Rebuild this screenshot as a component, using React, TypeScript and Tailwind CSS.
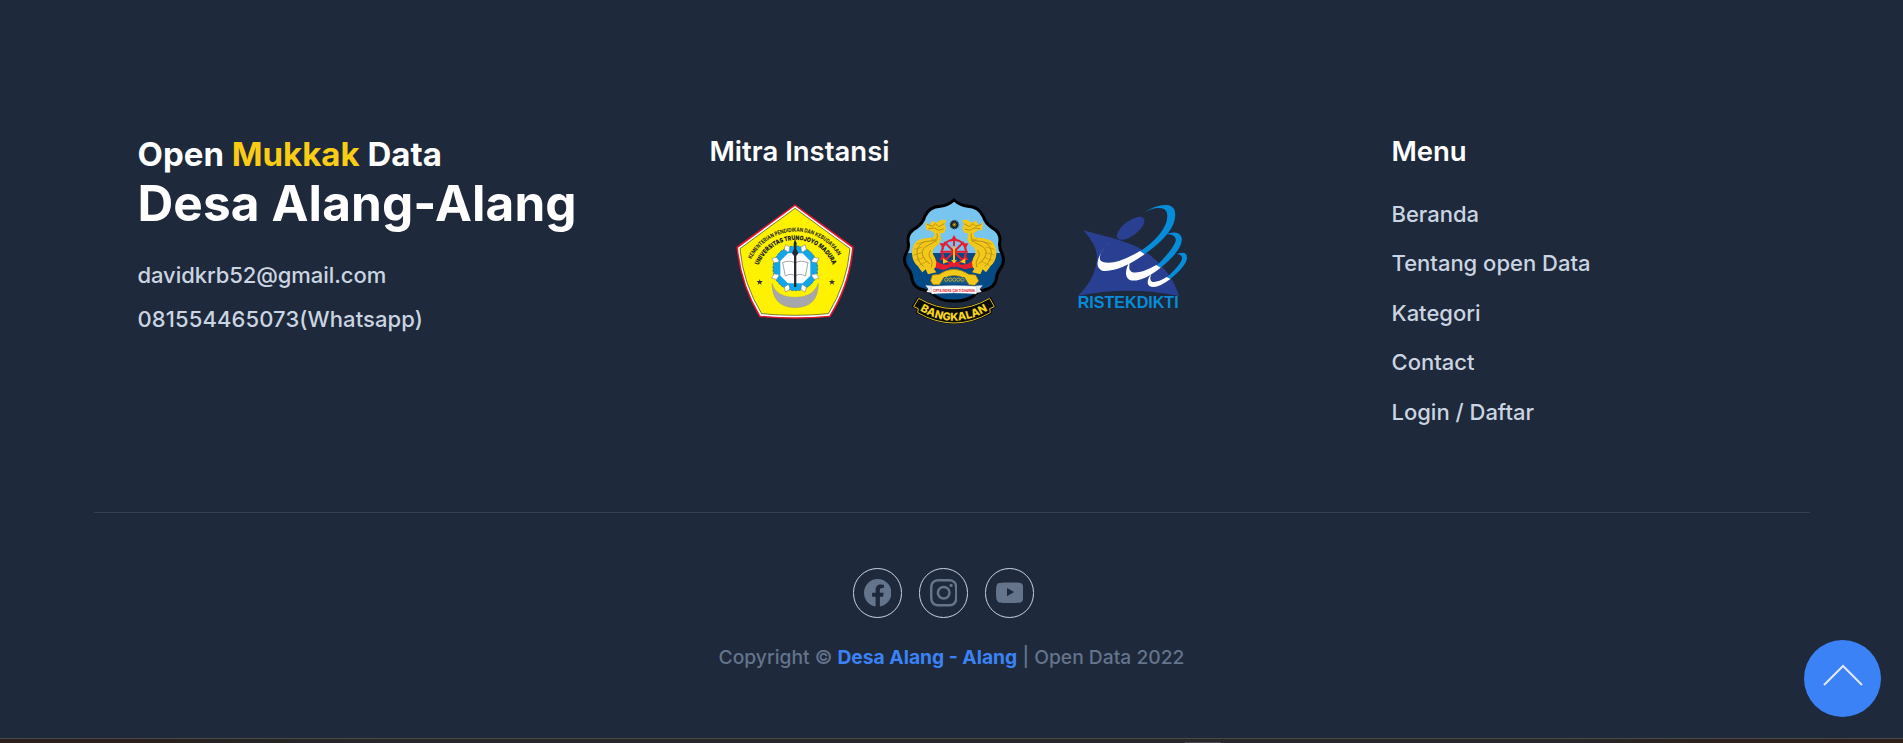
import React from "react";

const menu = ["Beranda", "Tentang open Data", "Kategori", "Contact", "Login / Daftar"];

function CampusLogo() {
  return (
    <svg width="150" height="145" viewBox="0 0 450 435" className="block shrink-0">
      <path d="M225 43 L401 170 Q392 285 331 381 Q225 391 118 381 Q60 285 49 170 Z" fill="#e4142c" />
      <path d="M225 48 L396 173 Q387 282 328 377 Q225 387 121 377 Q64 282 54 173 Z" fill="#fff" />
      <path d="M225 55 L390 176 Q381 280 325 371 Q225 381 125 371 Q69 280 60 176 Z" fill="#fff200" stroke="#3c3c14" strokeWidth="2" />
      <defs>
        <path id="arcOuter" d="M94 208 A148 148 0 0 1 360 208" />
        <path id="arcInner" d="M116 226 A119 119 0 0 1 338 226" />
      </defs>
      <g fontFamily="Inter, sans-serif" fontWeight="700" fill="#222">
        <text fontSize="17" textLength="318" lengthAdjust="spacingAndGlyphs"><textPath href="#arcOuter">KEMENTERIAN PENDIDIKAN DAN KEBUDAYAAN</textPath></text>
        <text fontSize="19" fontWeight="900" textLength="285" lengthAdjust="spacingAndGlyphs"><textPath href="#arcInner">UNIVERSITAS TRUNOJOYO MADURA</textPath></text>
      </g>
      <path d="M156 280 Q168 322 225 322 Q281 322 295 280 Q296 352 225 353 Q156 352 156 280Z" fill="#a5a7aa" stroke="#888" />
      <circle cx="226" cy="235" r="67" fill="#12a5e8" stroke="#3d7590" strokeWidth="3" strokeDasharray="7 4" />
      {[22.5, 67.5, 112.5, 157.5, 202.5, 247.5, 292.5, 337.5].map((a) => (
        <path key={a} transform={`rotate(${a} 226 235)`} d="M226 158 L235 170 L228 181 L224 181 L217 170 Z" fill="#fff" stroke="#777" strokeWidth="1.5" />
      ))}
      <path d="M204 190 L248 190 L271 213 L271 257 L248 280 L204 280 L181 257 L181 213 Z" fill="#fff" />
      <path d="M188 218 Q210 209 226 219 Q242 209 264 218 L256 258 Q240 248 226 258 Q212 248 196 258Z" fill="#fff" stroke="#777" strokeWidth="2" />
      <path d="M225 147 L230 160 L229 177 L235 190 L229 198 L229 291 L222 291 L222 198 L216 190 L222 177 L221 160Z" fill="#252a30" />
      {[119, 336].map((x) => (
        <path key={x} transform={`translate(${x} 276)`} d="M0 -9 L2 -3 L9 -3 L4 2 L6 9 L0 4 L-6 9 L-4 2 L-9 -3 L-2 -3Z" fill="#333" />
      ))}
    </svg>
  );
}

const shield =
  "M207 30 Q225 46 248 49 Q281 50 295 80 Q301 100 321 113 Q350 129 344 159 Q342 176 351 190 Q362 216 345 237 Q335 250 334 267 Q328 294 300 299 Q281 302 268 315 Q245 335 207 333 Q169 335 147 315 Q133 302 115 299 Q86 294 81 267 Q80 250 70 237 Q52 216 63 190 Q73 176 70 159 Q64 129 94 113 Q114 100 119 80 Q133 50 166 49 Q190 46 207 30Z";

function Serpent() {
  return (
    <g>
      <path d="M121 97 L134 105 L142 92 L155 98 L168 89 L184 90 L179 103 L183 116 L177 128 L166 130 L168 150 Q164 162 151 170 Q139 180 145 195 Q152 203 154 218 Q154 231 147 237 L154 247 L129 253 L122 238 L112 247 Q105 239 99 229 Q83 216 81 192 Q80 163 99 151 Q115 142 138 143 Q151 142 148 129 L136 121 L124 121Z" fill="#f2c81a" />
      <path d="M126 103 L143 109 L151 101 L161 110 L178 101 M130 116 L148 114 L162 121 L176 117 M156 130 Q162 150 138 153 Q101 152 96 184 Q95 213 116 230 M158 148 Q146 158 131 165 Q109 173 112 194 Q117 211 135 222 M137 181 Q127 194 138 207 Q145 218 139 232" fill="none" stroke="#a98516" strokeWidth="2.5" />
      <path d="M95 162 L121 155 M87 178 L112 171 M86 195 L111 188 M92 211 L116 203 M102 226 L126 214 M139 145 L155 157" stroke="#b8921c" strokeWidth="2" />
    </g>
  );
}

function RegencyLogo() {
  return (
    <svg width="140" height="145" viewBox="0 0 420 435" className="block shrink-0">
      <defs>
        <clipPath id="shieldClip"><path d={shield} /></clipPath>
        <path id="ribbonArc" d="M100 359 Q207 426 316 357" />
      </defs>
      <g clipPath="url(#shieldClip)">
        <rect x="50" y="20" width="320" height="169" fill="#78c5f0" />
        <rect x="50" y="189" width="320" height="160" fill="#064a85" />
      </g>
      <path d={shield} fill="none" stroke="#000" strokeWidth="9" />
      <g stroke="#e81c2e" strokeWidth="6" fill="none">
        <circle cx="207" cy="185" r="36" />
        <path d="M207 143 V223 M166 185 H248 M178 156 L236 214 M236 156 L178 214" />
      </g>
      {[0, 60, 120, 180, 240, 300].map((a) => (
        <path key={a} transform={`rotate(${a} 207 185)`} d="M207 135 L219 155 L208 151 L196 155Z" fill="#e81c2e" />
      ))}
      <path d="M133 197 L145 195 Q155 226 187 224 L207 211 L228 224 Q263 226 269 195 L282 197 L275 230 L239 238 L207 227 L176 240 L142 231Z" fill="#e81c2e" />
      <path d="M204 169 h6 v50 h-6z M174 205 l16 10 -16 6z M241 205 l-16 10 16 6z M198 210 h18 l-9 10z" fill="#fcc414" />
      <Serpent />
      <g transform="translate(415 0) scale(-1 1)"><Serpent /></g>
      <circle cx="208" cy="104" r="13" fill="#13202b" stroke="#4e7785" strokeWidth="4" strokeDasharray="3 3" />
      <path d="M208 97 V111 M201 104 H215 M203 99 L213 109 M213 99 L203 109" stroke="#fcc414" strokeWidth="1.5" />
      <path d="M137 272 L142 255 L163 253 Q206 223 251 253 L272 255 L281 273 L269 286 L252 284 L240 265 Q207 248 175 265 L163 284 L144 284Z" fill="#f2c81a" stroke="#997a12" strokeWidth="2" />
      <path d="M177 261 H238 L247 281 H168Z" fill="#155a88" />
      {[184, 196, 208, 220, 232].map((x) => <circle key={x} cx={x} cy="269" r="5" fill="none" stroke="#fcc414" strokeWidth="2" />)}
      <path d="M121 286 L142 287 V309 L124 306 L130 297Z M293 286 L272 287 V309 L290 306 L284 297Z" fill="#e5e8ee" />
      <path d="M140 289 Q207 284 274 289 V312 Q207 306 140 312Z" fill="#fff" stroke="#a7b5c4" />
      <text x="144" y="305" fontFamily="Inter, sans-serif" fontWeight="700" fontSize="12" fill="#e92335" textLength="126" lengthAdjust="spacingAndGlyphs">CIPTA INDRA ÇAKTI DHARMA</text>
      <path d="M98 321 Q207 386 317 321 L333 350 L319 359 L321 370 Q207 434 93 370 L96 359 L80 350Z" fill="#050505" />
      <path d="M101 325 Q207 387 314 325 L328 350 L314 356 L316 368 Q207 430 98 368 L100 356 L86 350Z" fill="#0b0b0b" stroke="#d8bd20" strokeWidth="3" />
      <text fontFamily="Inter, sans-serif" fontWeight="800" fontSize="33" fill="#f5d61c" textLength="216" lengthAdjust="spacingAndGlyphs"><textPath href="#ribbonArc" startOffset="5">BANGKALAN</textPath></text>
    </svg>
  );
}

function MinistryLogo() {
  return (
    <svg width="145" height="135" viewBox="0 0 435 405" className="block shrink-0">
      <path d="M70 121 Q110 132 160 145 Q224 164 253 183 Q333 238 357 318 Q205 287 53 318 Q105 269 111 207 Q113 168 70 121Z" fill="#293f91" />
      <ellipse cx="212" cy="115" rx="49" ry="22" transform="rotate(-37 212 115)" fill="#293f91" />
      <g fill="#078cda">
        <path d="M250 69 Q289 42 322 45 Q352 49 344 89 Q333 137 253 193 L240 184 Q306 140 320 93 Q328 59 305 55 Q280 51 250 69Z" />
        <path d="M315 132 Q358 119 365 143 Q371 177 301 234 L290 227 Q340 177 347 153 Q351 132 315 132Z" />
        <path d="M351 192 Q382 181 381 205 Q378 229 330 268 L320 262 Q363 223 366 206 Q367 194 351 192Z" />
      </g>
      <g fill="#fff">
        <path d="M157 144 Q100 208 129 216 Q166 227 240 183 L254 193 Q174 249 126 242 Q88 222 157 144Z" />
        <path d="M211 209 Q203 239 214 245 Q236 255 289 225 L302 233 Q242 280 209 270 Q186 256 211 209Z" />
        <path d="M274 250 Q267 272 276 275 Q291 279 320 261 L331 267 Q289 299 268 288 Q255 279 274 250Z" />
      </g>
      <text x="0" y="0" transform="translate(53 354) scale(1 1.14)" fontFamily="'Liberation Sans', sans-serif" fontWeight="700" fontSize="43" fill="#078cda" textLength="303" lengthAdjust="spacingAndGlyphs">RISTEKDIKTI</text>
    </svg>
  );
}

const social = [
  { name: "Facebook", d: "M16 8.049c0-4.446-3.582-8.05-8-8.05C3.58 0-.002 3.603-.002 8.05c0 4.017 2.926 7.347 6.75 7.951v-5.625h-2.03V8.05H6.75V6.275c0-2.017 1.195-3.131 3.022-3.131.876 0 1.791.157 1.791.157v1.98h-1.009c-.993 0-1.303.621-1.303 1.258v1.51h2.218l-.354 2.326H9.25V16c3.824-.604 6.75-3.934 6.75-7.951z" },
  { name: "Instagram", d: "M8 0C5.829 0 5.556.01 4.703.048 3.85.088 3.269.222 2.76.42a3.917 3.917 0 0 0-1.417.923A3.927 3.927 0 0 0 .42 2.76C.222 3.268.087 3.85.048 4.7.01 5.555 0 5.827 0 8.001c0 2.172.01 2.444.048 3.297.04.852.174 1.433.372 1.942.205.526.478.972.923 1.417.444.445.89.719 1.416.923.51.198 1.09.333 1.942.372C5.555 15.99 5.827 16 8 16s2.444-.01 3.298-.048c.851-.04 1.434-.174 1.943-.372a3.916 3.916 0 0 0 1.416-.923c.445-.445.718-.891.923-1.417.197-.509.332-1.09.372-1.942C15.99 10.445 16 10.173 16 8s-.01-2.445-.048-3.299c-.04-.851-.175-1.433-.372-1.941a3.926 3.926 0 0 0-.923-1.417A3.911 3.911 0 0 0 13.24.42c-.51-.198-1.092-.333-1.943-.372C10.443.01 10.172 0 7.998 0h.003zm-.717 1.442h.718c2.136 0 2.389.007 3.232.046.78.035 1.204.166 1.486.275.373.145.64.319.92.599.28.28.453.546.598.92.11.281.24.705.275 1.485.039.843.047 1.096.047 3.231s-.008 2.389-.047 3.232c-.035.78-.166 1.203-.275 1.485a2.47 2.47 0 0 1-.599.919c-.28.28-.546.453-.92.598-.28.11-.704.24-1.485.276-.843.038-1.096.047-3.232.047s-2.39-.009-3.233-.047c-.78-.036-1.203-.166-1.485-.276a2.478 2.478 0 0 1-.92-.598 2.48 2.48 0 0 1-.6-.92c-.109-.281-.24-.705-.275-1.485-.038-.843-.046-1.096-.046-3.233 0-2.136.008-2.388.046-3.231.036-.78.166-1.204.276-1.486.145-.373.319-.64.599-.92.28-.28.546-.453.92-.598.282-.11.705-.24 1.485-.276.738-.034 1.024-.044 2.515-.045v.002zm4.988 1.328a.96.96 0 1 0 0 1.92.96.96 0 0 0 0-1.92zm-4.27 1.122a4.109 4.109 0 1 0 0 8.217 4.109 4.109 0 0 0 0-8.217zm0 1.441a2.667 2.667 0 1 1 0 5.334 2.667 2.667 0 0 1 0-5.334z" },
  { name: "YouTube", d: "M8.051 1.999h.089c.822.003 4.987.033 6.11.335a2.01 2.01 0 0 1 1.415 1.42c.3 1.12.335 3.46.335 4.246 0 .786-.035 3.126-.335 4.246a2.01 2.01 0 0 1-1.415 1.42c-1.123.302-5.288.332-6.11.335h-.179c-.822-.003-4.987-.033-6.11-.335a2.01 2.01 0 0 1-1.415-1.42C.036 11.126 0 8.786 0 8c0-.786.036-3.126.336-4.246a2.01 2.01 0 0 1 1.415-1.42c1.123-.302 5.288-.332 6.11-.335zM6.4 5.209v4.818l4.157-2.408z" },
];

export default function App() {
  return (
    <div className="relative flex h-[743px] w-full flex-col overflow-hidden bg-[#1e293b] font-['Inter',sans-serif]">
      <footer className="flex flex-1 flex-col px-[94px] pt-[131.5px]">
        <div className="-mr-px flex h-[381px] items-start border-b border-[#334155] pl-[43.5px]">
          <div className="w-[572px] shrink-0 font-bold text-white">
            <h3 className="text-[33px] leading-[44px]">Open <span className="text-[#facc15]">Mukkak</span> Data</h3>
            <h2 className="text-[49.5px] leading-[55px] tracking-[0.12px]">Desa Alang-Alang</h2>
            <div className="mt-[22px] text-[22px] leading-[44px] font-medium text-[#cbd5e1]">
              <p className="tracking-[-0.07px]">davidkrb52@gmail.com</p>
              <p className="tracking-[0.11px]">081554465073(Whatsapp)</p>
            </div>
          </div>
          <div className="w-[682px] shrink-0">
            <h3 className="text-[27.5px] leading-[38.5px] font-semibold text-white">Mitra Instansi</h3>
            <div className="mt-[20px] ml-[10.5px] flex">
              <CampusLogo />
              <div className="ml-[15px]"><RegencyLogo /></div>
              <div className="ml-[35px]"><MinistryLogo /></div>
            </div>
          </div>
          <div>
            <h3 className="text-[27.5px] leading-[38.5px] tracking-[-0.1px] font-semibold text-white">Menu</h3>
            <ul className="mt-[27.5px] flex flex-col gap-[16.5px] text-[22px] leading-[33px] font-medium text-[#cbd5e1]">
              {menu.map((m) => <li key={m}><a href="#">{m}</a></li>)}
            </ul>
          </div>
        </div>
        <div className="flex flex-col items-center pt-[55.5px]">
          <div className="flex gap-[16.5px] pr-[16.5px]">
            {social.map((s) => (
              <a key={s.name} href="#" aria-label={s.name} className="flex size-[49.5px] items-center justify-center rounded-full border border-[#cbd5e1] text-[#64748b]">
                <svg width="27.5" height="27.5" viewBox="0 0 16 16" fill="currentColor"><path d={s.d} /></svg>
              </a>
            ))}
          </div>
          <p className="mt-[25.5px] text-[19.25px] leading-[28px] font-medium text-[#64748b]">
            Copyright © <a href="#" className="font-bold text-[#3b82f6]">Desa Alang - Alang</a> | Open Data 2022
          </p>
        </div>
      </footer>
      <div className="flex h-[5px] shrink-0 items-end border-t border-[#4a4948] bg-[linear-gradient(90deg,#2b1f1d_0%,#29201d_8%,#252423_12%,#272829_20%,#272829_82%,#2a211e_90%,#2e1f1a_100%)]">
        <div className="ml-[1185px] h-px w-[36px] bg-[#4a4a4a]" />
      </div>
      <a href="#" aria-label="Top" className="absolute top-[640px] left-[1804px] flex size-[77px] items-center justify-center rounded-full bg-[#3b82f6]">
        <svg width="40" height="24" viewBox="0 0 40 24" fill="none" stroke="#e2e8f0" strokeWidth="2" className="mb-[7px]"><path d="M1 22 L20 3 L39 22" /></svg>
      </a>
    </div>
  );
}
